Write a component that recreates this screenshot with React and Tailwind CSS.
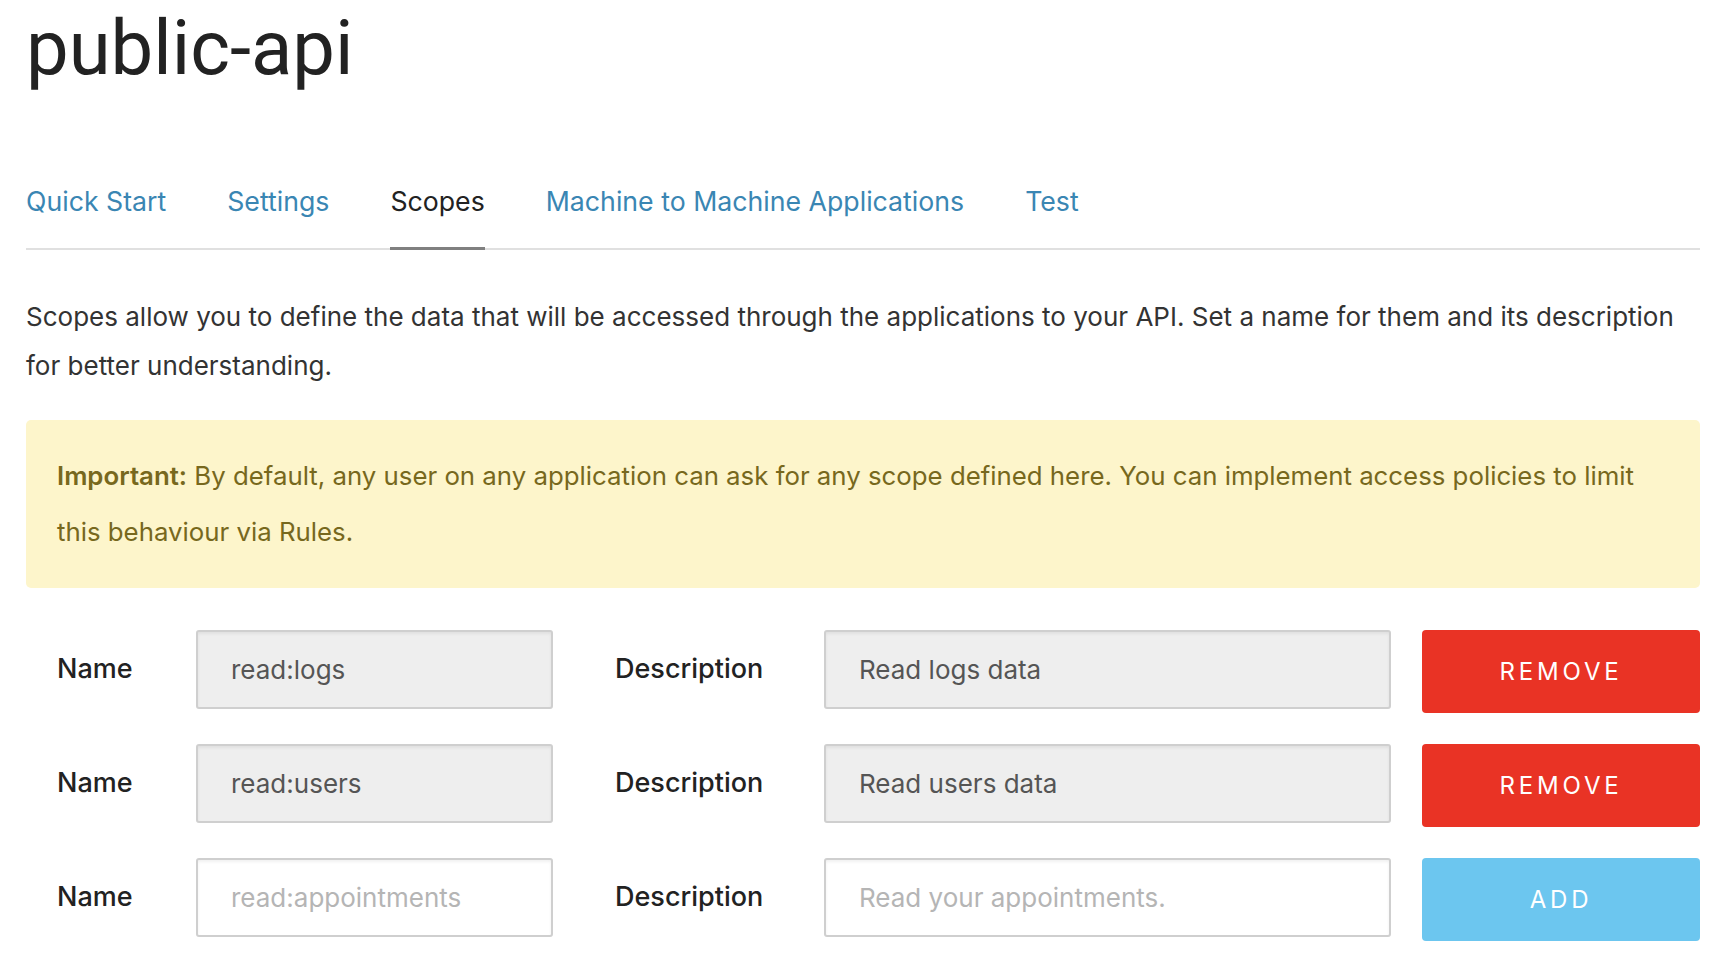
const tabs = [
  { label: "Quick Start" },
  { label: "Settings" },
  { label: "Scopes", active: true },
  { label: "Machine to Machine Applications" },
  { label: "Test" },
];

const scopes = [
  { name: "read:logs", description: "Read logs data" },
  { name: "read:users", description: "Read users data" },
];

function ScopeRow({ name, description, isNew }) {
  const inputBase =
    "h-[79px] rounded-[3px] border-2 border-[#cfcfcf] px-[33px] text-[26px] outline-none shadow-[inset_0_2px_3px_rgba(0,0,0,0.06)]";
  const inputTone = isNew
    ? "bg-white text-[#555] placeholder:text-[#b5b5b5]"
    : "bg-[#eeeeee] text-[#555]";

  return (
    <div className="flex items-start">
      <label className="w-[170px] pl-[31px] h-[79px] flex items-center text-[27px] font-medium text-[#222]">
        Name
      </label>
      <input
        className={`w-[357px] ${inputBase} ${inputTone}`}
        defaultValue={isNew ? undefined : name}
        placeholder={isNew ? name : undefined}
        readOnly={!isNew}
      />
      <label className="ml-[62px] w-[209px] h-[79px] flex items-center text-[27px] font-medium text-[#222]">
        Description
      </label>
      <input
        className={`w-[567px] ${inputBase} ${inputTone}`}
        defaultValue={isNew ? undefined : description}
        placeholder={isNew ? description : undefined}
        readOnly={!isNew}
      />
      <button
        className={`ml-[31px] flex-1 h-[83px] rounded-[4px] text-white text-[24px] font-normal tracking-[0.16em] ${
          isNew ? "bg-[#6cc6ef]" : "bg-[#e93325]"
        }`}
      >
        {isNew ? "ADD" : "REMOVE"}
      </button>
    </div>
  );
}

export default function App() {
  return (
    <div className="min-h-screen bg-white pl-[26px] pr-[28px] font-['Inter',sans-serif] text-[#333]">
      <h1 className="pt-[6px] font-['Roboto',sans-serif] text-[76px] leading-[84px] font-normal text-[#222]">
        public-api
      </h1>

      <nav className="mt-[93px] flex gap-[61px] border-b-2 border-[#e0e0e0]">
        {tabs.map((tab) => (
          <a
            key={tab.label}
            href="#"
            className={`-mb-[2px] pb-[28px] text-[26.7px] leading-[36px] border-b-[3px] ${
              tab.active
                ? "text-[#222] border-[#808080]"
                : "text-[#3a86b3] border-transparent"
            }`}
          >
            {tab.label}
          </a>
        ))}
      </nav>

      <p className="mt-[42px] text-[26px] leading-[49px] text-[#333]">
        Scopes allow you to define the data that will be accessed through the
        applications to your API. Set a name for them and its description for
        better understanding.
      </p>

      <div className="mt-[30px] rounded-[5px] bg-[#fdf5cb] px-[31px] py-[28px] text-[25.8px] leading-[56px] text-[#77681d]">
        <strong className="font-semibold">Important:</strong> By default, any
        user on any application can ask for any scope defined here. You can
        implement access policies to limit this behaviour via Rules.
      </div>

      <div className="mt-[42px] flex flex-col gap-[31px]">
        {scopes.map((s) => (
          <ScopeRow key={s.name} name={s.name} description={s.description} />
        ))}
        <ScopeRow
          name="read:appointments"
          description="Read your appointments."
          isNew
        />
      </div>
    </div>
  );
}
